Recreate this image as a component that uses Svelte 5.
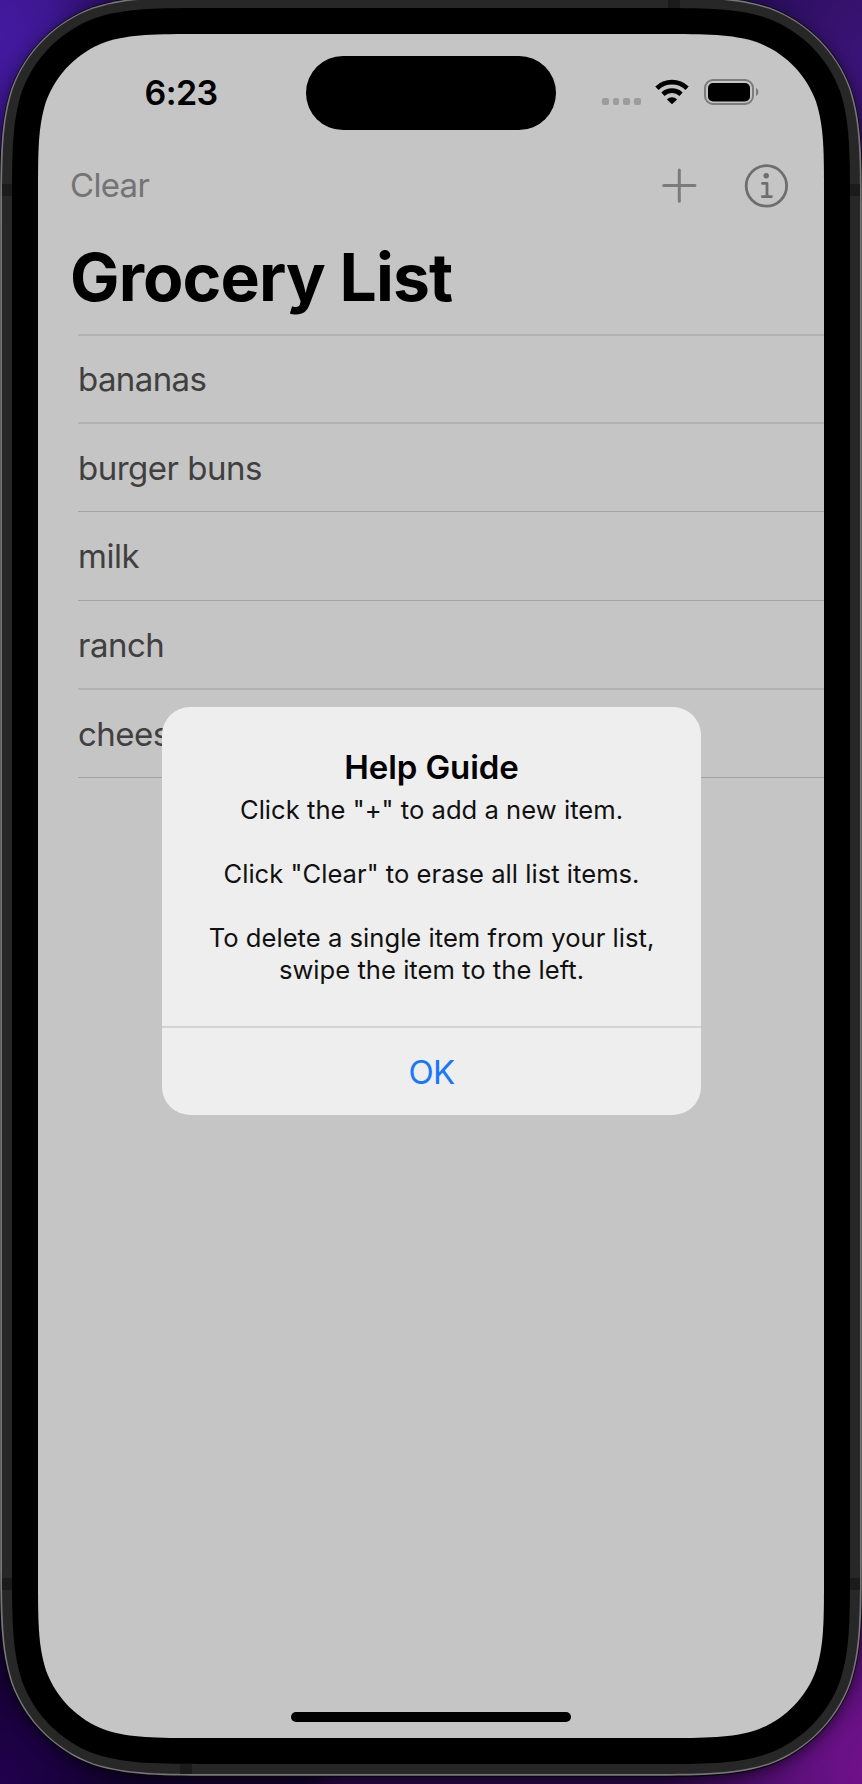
<script>
  const items = ['bananas', 'burger buns', 'milk', 'ranch', 'cheese'];

  // Rounded rectangle with continuous-curvature corners.
  function squircle(x, y, w, h, r) {
    const a = 1.52866 * r, b = 1.08849 * r, c = 0.86841 * r, d = 0.63149 * r;
    const e = 0.07491 * r, f = 0.37282 * r, g = 0.16906 * r;
    const X = x + w, Y = y + h;
    return `M${x + a} ${y}L${X - a} ${y}C${X - b} ${y} ${X - c} ${y} ${X - d} ${y + e}` +
      `C${X - f} ${y + g} ${X - g} ${y + f} ${X - e} ${y + d}C${X} ${y + c} ${X} ${y + b} ${X} ${y + a}` +
      `L${X} ${Y - a}C${X} ${Y - b} ${X} ${Y - c} ${X - e} ${Y - d}` +
      `C${X - g} ${Y - f} ${X - f} ${Y - g} ${X - d} ${Y - e}C${X - c} ${Y} ${X - b} ${Y} ${X - a} ${Y}` +
      `L${x + a} ${Y}C${x + b} ${Y} ${x + c} ${Y} ${x + d} ${Y - e}` +
      `C${x + f} ${Y - g} ${x + g} ${Y - f} ${x + e} ${Y - d}C${x} ${Y - c} ${x} ${Y - b} ${x} ${Y - a}` +
      `L${x} ${y + a}C${x} ${y + b} ${x} ${y + c} ${x + e} ${y + d}` +
      `C${x + g} ${y + f} ${x + f} ${y + g} ${x + d} ${y + e}C${x + c} ${y} ${x + b} ${y} ${x + a} ${y}Z`;
  }
</script>

<div class="desktop">
  <svg class="device" width="862" height="1784" viewBox="0 0 862 1784" aria-hidden="true">
    <path class="shadow" d={squircle(0, 0, 862, 1780, 148)} fill="#000" />
    <path d={squircle(-0.5, -4.5, 863, 1781.5, 148)} fill="#09040f" />
    <path d={squircle(0.2, -3.8, 861.6, 1779.6, 147)} fill="#777" />
    <path d={squircle(2, -2, 858, 1776, 144)} fill="#272727" />
    <g fill="#1b1b1b">
      <rect x="2" y="184" width="10" height="12" />
      <rect x="850" y="184" width="10" height="12" />
      <rect x="2" y="1578" width="10" height="12" />
      <rect x="850" y="1578" width="10" height="12" />
      <rect x="668" y="0" width="12" height="8" />
      <rect x="180" y="1764" width="12" height="10" />
    </g>
    <path d={squircle(12, 8, 838, 1756, 132)} fill="#000" />
    <path d={squircle(38, 34, 786, 1704, 107)} fill="#c5c5c5" />
  </svg>

  <div class="screen">
    <header class="status">
      <span class="time">6:23</span>
      <span class="island"></span>
      <span class="indicators">
        <span class="cell"><i></i><i></i><i></i><i></i></span>
        <svg width="34" height="26" viewBox="0 0 34 26">
          <g fill="none" stroke="#000" stroke-width="4.7">
            <path d="M1.9 9.2A22 22 0 0 1 32.1 9.2" />
            <path d="M7.9 15.2A13.6 13.6 0 0 1 26.1 15.2" />
          </g>
          <path d="M17 25.3L11.9 20.4A7.2 7.2 0 0 1 22.1 20.4Z" fill="#000" />
        </svg>
        <svg class="battery" width="55" height="26" viewBox="0 0 55 26">
          <rect x="1" y="1" width="48" height="24" rx="8" fill="none" stroke="#7c7c7c" stroke-width="2" />
          <rect x="4" y="4" width="42" height="18.4" rx="5" fill="#000" />
          <path d="M52 9C55.2 10.2 55.2 15.8 52 17Z" fill="#7c7c7c" />
        </svg>
      </span>
    </header>

    <nav>
      <span class="clear">Clear</span>
      <svg class="plus" width="36" height="36" viewBox="0 0 36 36">
        <path d="M18.3 2V33.3M2.7 17.5H34" stroke="#7b7b7b" stroke-width="3" stroke-linecap="round" />
      </svg>
      <svg width="44" height="44" viewBox="0 0 44 44">
        <circle cx="22.4" cy="21.9" r="20.2" fill="none" stroke="#6e6e6e" stroke-width="2.8" />
        <circle cx="22.2" cy="11.8" r="2.7" fill="#6e6e6e" />
        <path d="M18.5 19.4H23V32.4M18.4 32.7H27.4" fill="none" stroke="#6e6e6e" stroke-width="2.8" stroke-linecap="round" stroke-linejoin="round" />
      </svg>
    </nav>

    <h1>Grocery List</h1>

    <ul>
      {#each items as item}
        <li>{item}</li>
      {/each}
    </ul>

    <div class="home"></div>

    <section class="alert" role="alertdialog" aria-labelledby="alert-title">
      <div class="body">
        <h2 id="alert-title">Help Guide</h2>
        <p>Click the "+" to add a new item.</p>
        <p>Click "Clear" to erase all list items.</p>
        <p>To delete a single item from your list,<br />swipe the item to the left.</p>
      </div>
      <button>OK</button>
    </section>
  </div>
</div>

<style>
  :global(body) { margin: 0; overflow: hidden; }
  .desktop {
    display: grid;
    width: 862px;
    height: 1784px;
    overflow: hidden;
    font-family: Inter, "Liberation Sans", sans-serif;
    background:
      radial-gradient(ellipse 130px 170px at 0 35px, #43199f 0%, #3d1791 40%, transparent 100%),
      radial-gradient(ellipse 130px 170px at 870px 60px, #3c137a 0%, #35126c 40%, transparent 100%),
      radial-gradient(ellipse 220px 260px at 880px 1770px, #74128e 0%, #621080 30%, transparent 100%),
      radial-gradient(ellipse 130px 150px at 0 1784px, #21004e 0%, transparent 100%),
      linear-gradient(90deg, transparent 35%, #2a0848 40%) 0 100% / 100% 160px no-repeat,
      linear-gradient(#260c5a 0 50%, #12022c 50% 100%);
  }
  .shadow { filter: blur(8px); opacity: 0.6; }
  .device, .screen { grid-area: 1 / 1; }
  .screen {
    position: relative;
    display: flex;
    flex-direction: column;
    box-sizing: border-box;
    width: 786px;
    height: 1704px;
    margin: 34px 0 0 38px;
  }
  .status {
    display: grid;
    grid-template-columns: 268px 250px 268px;
    height: 116px;
    padding-top: 22px;
    box-sizing: border-box;
  }
  .time {
    padding: 16px 0 0 106.5px;
    font-size: 34px;
    line-height: 42px;
    font-weight: 600;
    letter-spacing: -0.6px;
  }
  .island { height: 74px; border-radius: 37px; background: #000; }
  .indicators { display: flex; align-items: flex-start; padding: 23px 0 0 46px; }
  .indicators svg { flex: none; }
  .cell { display: flex; gap: 4px; margin: 19px 14px 0 0; }
  .cell i { width: 6.7px; height: 7px; border-radius: 2px; background: #9c9c9c; }
  .battery { margin-left: 15px; }
  nav {
    display: flex;
    align-items: center;
    height: 71px;
    padding: 0 36px 0 32px;
  }
  .clear { flex: 1; padding-bottom: 2px; font-size: 33px; letter-spacing: -0.7px; color: #747474; }
  .plus { margin-right: 47px; }
  h1 {
    margin: 0;
    padding: 13px 0 0 32px;
    height: 113px;
    box-sizing: border-box;
    font-size: 66px;
    line-height: 86px;
    font-weight: 700;
    letter-spacing: -0.9px;
  }
  ul { list-style: none; margin: 0 0 0 40px; padding: 0; border-top: 2px solid #b3b3b3; }
  li {
    box-sizing: border-box;
    height: 88px;
    padding-top: 1px;
    border-bottom: 2px solid #b3b3b3;
    font-size: 33px;
    line-height: 86px;
    letter-spacing: -0.5px;
    color: #404040;
  }
  li:first-child { padding-top: 0; letter-spacing: -0.6px; }
  li:nth-child(2), li:nth-child(3), li:nth-child(5) { border-bottom: 1px solid #a3a3a3; }
  li:nth-child(3), li:nth-child(4) { height: 89px; }
  .home { width: 280px; height: 10px; margin: auto auto 16px; border-radius: 5px; background: #000; }
  .alert {
    position: absolute;
    left: 124px;
    top: 673px;
    width: 539px;
    height: 408px;
    display: flex;
    flex-direction: column;
    overflow: hidden;
    border-radius: 28px;
    background: #eee;
    text-align: center;
  }
  .body { flex: 1; padding-top: 39px; border-bottom: 2px solid #d3d3d3; }
  h2 { margin: 0 0 6px; font-size: 33px; line-height: 42px; font-weight: 600; letter-spacing: -0.1px; }
  p { margin: 0 0 32px; font-size: 25.6px; line-height: 32px; letter-spacing: 0.02px; color: #111; }
  button {
    height: 87px;
    padding: 1px 0 0;
    border: 0;
    background: none;
    font: 400 33px/86px Inter, "Liberation Sans", sans-serif;
    letter-spacing: -0.6px;
    color: #1677ff;
  }
</style>
